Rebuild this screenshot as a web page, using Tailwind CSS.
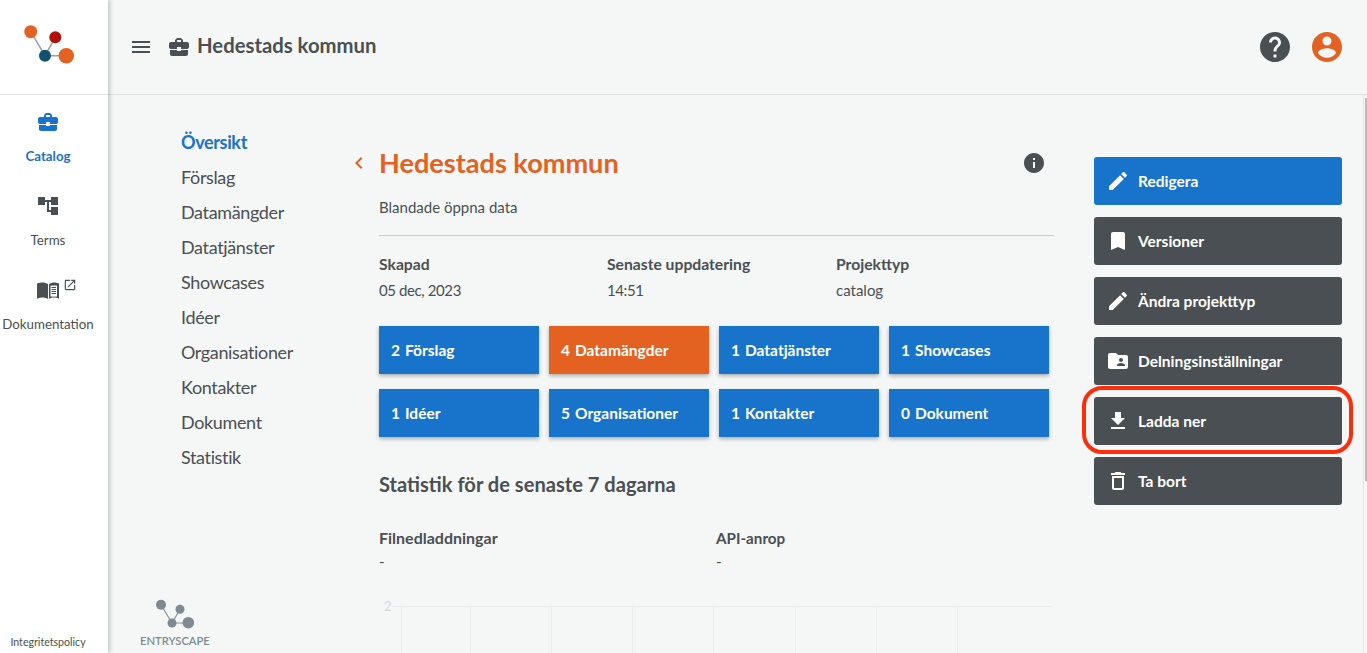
<!doctype html>
<html lang="sv">
<head>
<meta charset="utf-8">
<script src="https://cdn.jsdelivr.net/npm/@tailwindcss/browser@4"></script>
</head>
<body class="font-['Lato','Noto_Sans',sans-serif] bg-[#f5f7f7] text-[#4a4f53]">
<div class="flex h-[653px] w-[1367px] overflow-hidden">
  <aside class="relative z-10 flex h-full w-[108px] shrink-0 flex-col bg-white shadow-[2px_0_4px_rgba(0,0,0,0.2)]">
    <div class="flex h-[95px] shrink-0 items-center justify-center border-b border-[#e2e2e2] pr-[8px]">
      <svg width="52" height="40" viewBox="0 0 52 40" class="mb-[4px]">
        <path d="M6.700 6.700 21 30.700 31.300 12.300M21 30.700H42" stroke="#9a9fa2" stroke-width="1.500" fill="none"/>
        <circle cx="6.700" cy="6.700" r="6.500" fill="#e36121"/><circle cx="31.300" cy="12.300" r="6" fill="#b01007"/><circle cx="21" cy="30.700" r="6" fill="#11506f"/><circle cx="42.300" cy="30.700" r="7.700" fill="#e36121"/>
      </svg>
    </div>
    <div class="flex flex-col pr-[12px]">
      <a class="mt-[15px] flex flex-col items-center text-[#1873ca]">
        <svg width="24" height="24" viewBox="0 0 24 24" fill="currentColor"><path d="M10 16v-1H3.010L3 19c0 1.110.89 2 2 2h14c1.110 0 2-.89 2-2v-4h-7v1h-4zm10-9h-4.010V5l-2-2h-4l-2 2v2H4c-1.100 0-2 .9-2 2v3c0 1.110.89 2 2 2h6v-2h4v2h6c1.100 0 2-.9 2-2V9c0-1.100-.9-2-2-2zm-6 0h-4V5h4v2z"/></svg>
        <span class="mt-[13px] text-[13.300px] font-bold leading-[18px]">Catalog</span>
      </a>
      <a class="mt-[29px] flex flex-col items-center">
        <svg width="24" height="24" viewBox="0 0 24 24" fill="currentColor"><path d="M22 11V3h-7v3H9V3H2v8h7V8h2v10h4v3h7v-8h-7v3h-2V8h2v3z"/></svg>
        <span class="mt-[13px] text-[13.300px] leading-[18px]">Terms</span>
      </a>
      <a class="relative mt-[29px] flex flex-col items-center">
        <svg width="24" height="24" viewBox="0 0 24 24" fill="currentColor"><path d="M1 5.500C3 4.600 5 4.400 6.500 4.400 8.500 4.400 10.500 5 12 6v15c-1.500-1-3.500-1.500-5.500-1.500-2 0-3.800.4-5.500 1.200zM13 6c1.500-1 3-1.600 5-1.600 1.500 0 3 .3 5 1.100v15.200c-2-.8-3.500-1.100-5-1.100-2 0-3.500.5-5 1.400z"/><path d="M14.500 7.600h6.500v11h-6.500z" fill="#fff"/><path d="M15.500 9.500h4.500M15.500 11.500h4.500M15.500 13.500h4.500M15.500 15.500h4.500" stroke="#4a4f53" stroke-width="1"/></svg>
        <svg class="absolute left-[63px] top-0" width="14" height="14" viewBox="0 0 24 24" fill="currentColor"><path d="M19 19H5V5h7V3H5c-1.110 0-2 .9-2 2v14c0 1.100.89 2 2 2h14c1.100 0 2-.9 2-2v-7h-2v7zM14 3v2h3.590l-9.830 9.830 1.410 1.410L19 6.410V10h2V3h-7z"/></svg>
        <span class="mt-[13px] text-[13.300px] leading-[18px]">Dokumentation</span>
      </a>
    </div>
    <div class="mt-auto mb-[3px] pr-[12px] text-center text-[10.600px] leading-[16px]">Integritetspolicy</div>
  </aside>

  <div class="flex min-w-0 flex-1 flex-col">
    <header class="flex h-[95px] shrink-0 items-center border-b border-[#dedfdf] pl-[21px] pr-[22px]">
      <svg width="24" height="24" viewBox="0 0 24 24" fill="currentColor"><path d="M3 18h18v-2H3v2zm0-5h18v-2H3v2zm0-7v2h18V6H3z"/></svg>
      <svg class="ml-[14px]" width="24" height="24" viewBox="0 0 24 24" fill="currentColor"><path d="M10 16v-1H3.010L3 19c0 1.110.89 2 2 2h14c1.110 0 2-.89 2-2v-4h-7v1h-4zm10-9h-4.010V5l-2-2h-4l-2 2v2H4c-1.100 0-2 .9-2 2v3c0 1.110.89 2 2 2h6v-2h4v2h6c1.100 0 2-.9 2-2V9c0-1.100-.9-2-2-2zm-6 0h-4V5h4v2z"/></svg>
      <h1 class="ml-[6px] mb-[4px] text-[20.300px] font-bold">Hedestads kommun</h1>
      <div class="ml-auto flex items-center gap-[16px]">
        <svg width="36" height="36" viewBox="0 0 24 24" fill="currentColor"><path d="M12 2C6.480 2 2 6.480 2 12s4.480 10 10 10 10-4.480 10-10S17.520 2 12 2zm1 17h-2v-2h2v2zm2.070-7.750l-.9.92C13.450 12.900 13 13.500 13 15h-2v-.5c0-1.100.45-2.100 1.170-2.830l1.240-1.260c.37-.36.59-.86.59-1.410 0-1.100-.9-2-2-2s-2 .9-2 2H8c0-2.210 1.790-4 4-4s4 1.790 4 4c0 .88-.36 1.680-.93 2.250z"/></svg>
        <svg width="36" height="36" viewBox="0 0 24 24" fill="#e36121"><path d="M12 2C6.480 2 2 6.480 2 12s4.480 10 10 10 10-4.480 10-10S17.520 2 12 2zm0 3c1.660 0 3 1.340 3 3s-1.340 3-3 3-3-1.340-3-3 1.340-3 3-3zm0 14.200c-2.500 0-4.710-1.280-6-3.220.03-1.990 4-3.080 6-3.080 1.990 0 5.970 1.090 6 3.080-1.290 1.940-3.500 3.220-6 3.220z"/></svg>
      </div>
    </header>

    <div class="relative flex min-h-0 flex-1">
      <nav class="relative w-[271px] shrink-0 pl-[73px] pt-[30px] text-[18px] leading-[35px] tracking-[-0.36px]">
        <a class="block font-bold text-[#1873ca]">Översikt</a>
        <a class="block">Förslag</a>
        <a class="block">Datamängder</a>
        <a class="block">Datatjänster</a>
        <a class="block">Showcases</a>
        <a class="block">Idéer</a>
        <a class="block">Organisationer</a>
        <a class="block">Kontakter</a>
        <a class="block">Dokument</a>
        <a class="block">Statistik</a>
        <div class="absolute left-[32px] top-[504px] flex flex-col items-center tracking-normal text-[#7e8a90]">
          <svg width="40" height="30" viewBox="0 0 40 30">
            <path d="M6 5.700 17 24 25 10.300M17 24H33" stroke="#8a9498" stroke-width="1.200" fill="none"/>
            <circle cx="6" cy="5.700" r="5" fill="#7e8a90"/><circle cx="25" cy="10.300" r="4.500" fill="#7e8a90"/><circle cx="17" cy="24" r="4.500" fill="#7e8a90"/><circle cx="33.300" cy="23.700" r="5.800" fill="#7e8a90"/>
          </svg>
          <span class="mt-[5px] text-[11.200px] font-semibold leading-[14px]">ENTRYSCAPE</span>
        </div>
      </nav>

      <main class="relative w-[675px] shrink-0 pt-[53px]">
        <svg class="absolute left-[-32px] top-[56px]" width="24" height="24" viewBox="0 0 24 24" fill="#e36121"><path d="M15.410 7.410 14 6l-6 6 6 6 1.410-1.410L10.830 12z"/></svg>
        <div class="flex items-center justify-between">
          <h2 class="text-[27.100px] font-bold leading-[30px] text-[#e36121]">Hedestads kommun</h2>
          <svg class="mr-[8px]" width="24" height="24" viewBox="0 0 24 24" fill="currentColor"><path d="M12 2C6.480 2 2 6.480 2 12s4.480 10 10 10 10-4.480 10-10S17.520 2 12 2zm1 15h-2v-6h2v6zm0-8h-2V7h2v2z"/></svg>
        </div>
        <p class="mt-[19px] text-[15px] leading-[20px]">Blandade öppna data</p>
        <div class="mt-[18px] border-t border-[#c9cbcc]"></div>
        <dl class="mt-[18px] grid grid-cols-[228px_229px_1fr] text-[15px] leading-[20px]">
          <div><dt class="text-[15.700px] font-bold">Skapad</dt><dd class="mt-[6px] tracking-[-0.4px]">05 dec, 2023</dd></div>
          <div><dt class="text-[15.700px] font-bold">Senaste uppdatering</dt><dd class="mt-[6px] tracking-[-0.4px]">14:51</dd></div>
          <div><dt class="text-[15.700px] font-bold">Projekttyp</dt><dd class="mt-[6px]">catalog</dd></div>
        </dl>
        <div class="mt-[26px] grid w-[670px] grid-cols-4 gap-x-[10px] gap-y-[15px] text-[15.500px] font-bold text-white">
          <a class="flex h-[48px] items-center gap-[5px] bg-[#1873ca] pl-[12px] pt-[2px] shadow-[0_2px_4px_rgba(0,0,0,0.3)]"><span>2</span><span>Förslag</span></a>
          <a class="flex h-[48px] items-center gap-[5px] bg-[#e36121] pl-[12px] pt-[2px] shadow-[0_2px_4px_rgba(0,0,0,0.3)]"><span>4</span><span>Datamängder</span></a>
          <a class="flex h-[48px] items-center gap-[5px] bg-[#1873ca] pl-[12px] pt-[2px] shadow-[0_2px_4px_rgba(0,0,0,0.3)]"><span>1</span><span>Datatjänster</span></a>
          <a class="flex h-[48px] items-center gap-[5px] bg-[#1873ca] pl-[12px] pt-[2px] shadow-[0_2px_4px_rgba(0,0,0,0.3)]"><span>1</span><span>Showcases</span></a>
          <a class="flex h-[48px] items-center gap-[5px] bg-[#1873ca] pl-[12px] pt-[2px] shadow-[0_2px_4px_rgba(0,0,0,0.3)]"><span>1</span><span>Idéer</span></a>
          <a class="flex h-[48px] items-center gap-[5px] bg-[#1873ca] pl-[12px] pt-[2px] shadow-[0_2px_4px_rgba(0,0,0,0.3)]"><span>5</span><span>Organisationer</span></a>
          <a class="flex h-[48px] items-center gap-[5px] bg-[#1873ca] pl-[12px] pt-[2px] shadow-[0_2px_4px_rgba(0,0,0,0.3)]"><span>1</span><span>Kontakter</span></a>
          <a class="flex h-[48px] items-center gap-[5px] bg-[#1873ca] pl-[12px] pt-[2px] shadow-[0_2px_4px_rgba(0,0,0,0.3)]"><span>0</span><span>Dokument</span></a>
        </div>
        <h3 class="mt-[34px] text-[20.100px] font-bold leading-[26px]">Statistik för de senaste 7 dagarna</h3>
        <div class="mt-[31px] grid grid-cols-[337px_1fr] text-[15px] leading-[20px]">
          <div><div class="text-[16px] font-bold">Filnedladdningar</div><div class="mt-[3px]">-</div></div>
          <div><div class="text-[15.200px] font-bold">API-anrop</div><div class="mt-[3px]">-</div></div>
        </div>
        <div class="relative mt-[35px] ml-[22px] flex h-[60px] w-[651px] border-t border-[#ececec]">
          <span class="absolute left-[-17px] top-[-9px] text-[13px] leading-[16px] text-[#d5d7d8]">2</span>
          <span class="absolute left-[-9px] top-[-1px] h-px w-[9px] bg-[#ececec]"></span>
          <i class="block w-[69px] border-l border-[#ececec]"></i>
          <i class="block w-[81px] border-l border-[#ececec]"></i>
          <i class="block w-[81px] border-l border-[#ececec]"></i>
          <i class="block w-[81px] border-l border-[#ececec]"></i>
          <i class="block w-[82px] border-l border-[#ececec]"></i>
          <i class="block w-[81px] border-l border-[#ececec]"></i>
          <i class="block w-[81px] border-l border-[#ececec]"></i>
          <i class="block w-[95px] border-l border-[#ececec]"></i>
        </div>
      </main>

      <section class="ml-[40px] flex w-[248px] shrink-0 flex-col gap-[12px] pt-[62px] text-[15.500px] font-bold text-white">
        <a class="flex h-[48px] items-center rounded-[3px] bg-[#1873ca] pl-[12px]"><svg width="24" height="24" viewBox="0 0 24 24" fill="#fff"><path d="M3 17.250V21h3.750L17.810 9.940l-3.750-3.750L3 17.250zM20.710 7.040c.39-.39.39-1.020 0-1.410l-2.340-2.340c-.39-.39-1.020-.39-1.410 0l-1.830 1.830 3.750 3.750 1.830-1.830z"/></svg><span class="ml-[8px] mt-[2px]">Redigera</span></a>
        <a class="flex h-[48px] items-center rounded-[3px] bg-[#4a4f53] pl-[12px]"><svg width="24" height="24" viewBox="0 0 24 24" fill="#fff"><path d="M17 3H7c-1.100 0-1.990.9-1.990 2L5 21l7-3 7 3V5c0-1.100-.9-2-2-2z"/></svg><span class="ml-[8px] mt-[2px]">Versioner</span></a>
        <a class="flex h-[48px] items-center rounded-[3px] bg-[#4a4f53] pl-[12px]"><svg width="24" height="24" viewBox="0 0 24 24" fill="#fff"><path d="M3 17.250V21h3.750L17.810 9.940l-3.750-3.750L3 17.250zM20.710 7.040c.39-.39.39-1.020 0-1.410l-2.340-2.340c-.39-.39-1.020-.39-1.410 0l-1.830 1.830 3.750 3.750 1.830-1.830z"/></svg><span class="ml-[8px] mt-[2px]">Ändra projekttyp</span></a>
        <a class="flex h-[48px] items-center rounded-[3px] bg-[#4a4f53] pl-[12px]"><svg width="24" height="24" viewBox="0 0 24 24" fill="#fff"><path d="M20 6h-8l-2-2H4c-1.100 0-1.990.9-1.990 2L2 18c0 1.100.9 2 2 2h16c1.100 0 2-.9 2-2V8c0-1.100-.9-2-2-2zm-5 3c1.100 0 2 .9 2 2s-.9 2-2 2-2-.9-2-2 .9-2 2-2zm4 8h-8v-1c0-1.330 2.670-2 4-2s4 .67 4 2v1z"/></svg><span class="ml-[8px] mt-[2px]">Delningsinställningar</span></a>
        <a class="relative flex h-[48px] items-center rounded-[3px] bg-[#4a4f53] pl-[12px]"><svg width="24" height="24" viewBox="0 0 24 24" fill="#fff"><path d="M19 9h-4V3H9v6H5l7 7 7-7zM5 18v2h14v-2H5z"/></svg><span class="ml-[8px] mt-[2px]">Ladda ner</span>
          <span class="absolute left-[-12px] right-[-11px] top-[-11px] bottom-[-9px] rounded-[20px] border-[4.500px] border-[#ff2d0a]"></span></a>
        <a class="flex h-[48px] items-center rounded-[3px] bg-[#4a4f53] pl-[12px]"><svg width="24" height="24" viewBox="0 0 24 24" fill="#fff"><path d="M6 19c0 1.100.9 2 2 2h8c1.100 0 2-.9 2-2V7H6v12zM8 9h8v10H8V9zm7.500-5l-1-1h-5l-1 1H5v2h14V4z"/></svg><span class="ml-[8px] mt-[2px]">Ta bort</span></a>
      </section>
      <div class="absolute right-[3px] top-0 bottom-0 w-px bg-[#e4e5e5]"></div>
      <div class="absolute right-0 top-[3px] h-[383px] w-[2px] bg-[#b9babb]"></div>
    </div>
  </div>
</div>
</body>
</html>
